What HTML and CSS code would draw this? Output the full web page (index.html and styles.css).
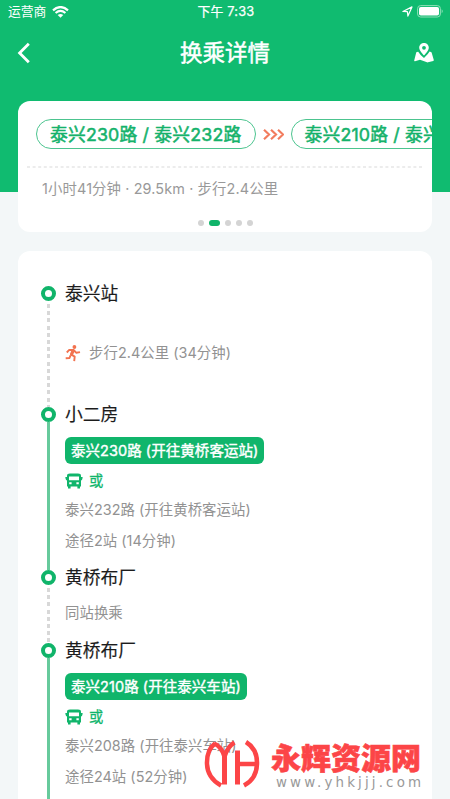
FILE: index.html
```html
<!DOCTYPE html>
<html lang="zh-CN">
<head>
<meta charset="utf-8">
<title>换乘详情</title>
<link rel="stylesheet" href="styles.css">
</head>
<body>
<svg class="defs" aria-hidden="true">
  <symbol id="bus" viewBox="0 0 18 16">
    <path fill-rule="evenodd" d="M2 3Q2 .6 5 .6H13Q16 .6 16 3V4H17.2Q18 4 17.6 5L16.9 7.2H16V13.6H15V15.4H12.4V13.6H5.6V15.4H3V13.6H2V7.2H1.1L.4 5Q0 4 .8 4H2ZM4 3.4V7.3H14V3.4ZM4.2 9.3V11.3H6.6V9.3ZM11.4 9.3V11.3H13.8V9.3Z"/>
  </symbol>
</svg>
<div class="screen">
  <header class="head">
    <div class="status">
      <div class="status-side">
        <span>运营商</span>
        <svg class="wifi" viewBox="0 0 17 12"><path d="M1 4.3Q8.5 -2.2 16 4.3M3.6 7Q8.5 2.9 13.4 7" fill="none" stroke="#fff" stroke-width="2.2"/><path d="M5.7 9Q8.5 6.8 11.3 9L8.5 11.8Z" fill="#fff"/></svg>
      </div>
      <span class="clock">下午 7:33</span>
      <div class="status-side status-right">
        <svg class="locate" viewBox="0 0 11 11"><path d="M.9 5.5 10 .9 5.9 10.1 5.4 5.7Z" fill="none" stroke="#fff" stroke-width="1.2" stroke-linejoin="round"/></svg>
        <svg class="battery" viewBox="0 0 27 13"><rect x=".6" y=".6" width="22.8" height="11.4" rx="3" fill="none" stroke="#8fe0b8" stroke-width="1"/><rect x="2" y="2" width="20" height="8.6" rx="1.8" fill="#fff"/><path d="M24.7 4.3Q26.8 6.3 24.7 8.3Z" fill="#8fe0b8"/></svg>
      </div>
    </div>
    <nav class="nav">
      <svg class="back" viewBox="0 0 14 22"><path d="M11.8 1.7 2.6 11 11.8 20.3" fill="none" stroke="#fff" stroke-width="2.8"/></svg>
      <h1>换乘详情</h1>
      <svg class="map" viewBox="0 0 20 20"><path fill="#fff" fill-rule="evenodd" d="M10 0C6.9 0 5.2 2.200 5.200 4.800 5.200 7.700 10 12.500 10 12.500S14.800 7.700 14.800 4.800C14.800 2.200 13.100 0 10 0ZM10 2.900A1.900 1.900 0 1 1 10 6.700 1.900 1.900 0 1 1 10 2.900Z"/><path fill="#fff" d="M4.200 8.700 2.800 9.100Q2.300 9.300 2.100 9.900L.2 17.400Q0 18.400 1 18.200L6 16.700 13 19.300Q13.500 19.500 14 19.300L19.200 17.900Q20 17.600 19.800 16.900L17.600 9.600Q17.400 9 16.900 8.900L15.600 8.600Q14.300 11.200 10 15 5.600 11.300 4.200 8.700Z"/></svg>
    </nav>
  </header>

  <section class="card summary">
    <div class="routes">
      <span class="pill">泰兴230路 / 泰兴232路</span>
      <svg class="arrows" viewBox="0 0 21 11"><path d="M1 .8 6 5.500 1 10.200M8 .8 13 5.500 8 10.200M15 .8 20 5.500 15 10.200" fill="none" stroke="#f27c5e" stroke-width="2.200"/></svg>
      <span class="pill">泰兴210路 / 泰兴208路</span>
    </div>
    <svg class="divider" viewBox="0 0 396 2"><path d="M0 1H396" stroke="#e6e6e6" stroke-width="1.300" stroke-dasharray="3 2.600"/></svg>
    <p class="facts">1小时41分钟 · 29.5km · 步行2.4公里</p>
    <div class="dots"><i></i><i class="on"></i><i></i><i></i><i></i></div>
  </section>

  <main class="card trip">
    <article class="leg walk leg-first">
      <div class="rail"><i class="node"></i><i class="line"></i></div>
      <div class="body">
        <h2>泰兴站</h2>
        <p class="note walk-note">
          <svg class="runner" viewBox="0 0 16 17"><circle cx="9.400" cy="2" r="1.900" fill="#f27350"/><path d="M1.800 7.500 4.200 4.900 8.600 5 11.400 7.800 15 7.100M8.100 5.300 6 9.400 9.700 11.600 9.200 16.200M5.600 10.300 4.400 13.100 .7 13.300" fill="none" stroke="#f27350" stroke-width="1.900" stroke-linejoin="round"/><path d="M6.500 4.800 10 5.600 7.700 10.500 5 9.400Z" fill="#f27350"/></svg>
          <span>步行2.4公里 (34分钟)</span>
        </p>
      </div>
    </article>
    <article class="leg ride leg-second">
      <div class="rail"><i class="node"></i><i class="line"></i></div>
      <div class="body">
        <h2>小二房</h2>
        <span class="tag">泰兴230路 (开往黄桥客运站)</span>
        <p class="or"><svg class="bus"><use href="#bus"/></svg>或</p>
        <p class="note">泰兴232路 (开往黄桥客运站)</p>
        <p class="note">途径2站 (14分钟)</p>
      </div>
    </article>
    <article class="leg walk leg-third">
      <div class="rail"><i class="node"></i><i class="line"></i></div>
      <div class="body">
        <h2>黄桥布厂</h2>
        <p class="note same">同站换乘</p>
      </div>
    </article>
    <article class="leg ride leg-last">
      <div class="rail"><i class="node"></i><i class="line"></i></div>
      <div class="body">
        <h2>黄桥布厂</h2>
        <span class="tag">泰兴210路 (开往泰兴车站)</span>
        <p class="or"><svg class="bus"><use href="#bus"/></svg>或</p>
        <p class="note">泰兴208路 (开往泰兴车站)</p>
        <p class="note">途径24站 (52分钟)</p>
      </div>
    </article>
  </main>

  <aside class="mark">
    <svg class="mark-logo" viewBox="0 0 56 50"><g fill="none" stroke="#fc4547"><path d="M11 4.500Q2.500 11 3 25T17 46.500" stroke-width="4.500"/><path d="M42 3Q53.500 10 53 25T40 46.500" stroke-width="4.500"/><path d="M10 4.500Q17 7 20.500 17.500 24 7 30.500 3.500" stroke-width="4.500"/><path d="M20.500 15V45.500M33.500 11.500V45.500" stroke-width="5"/><path d="M33 25H53" stroke-width="4.500"/></g></svg>
    <div class="mark-text">
      <strong>永辉资源网</strong>
      <span>www.yhkjjj.com</span>
    </div>
  </aside>
</div>
</body>
</html>
```
FILE: styles.css
```css
* { box-sizing: border-box; margin: 0; padding: 0; }
body {
  font-family: Inter, "Noto Sans CJK SC", sans-serif;
  background: #f3f7f8;
  white-space: nowrap;
}
.defs { display: none; }
svg { display: block; flex: none; }
.screen { position: relative; height: 799px; overflow: hidden; display: flex; flex-direction: column; }

.head { flex: none; height: 192px; background: #10bb70; color: #fff; }
.status {
  display: grid; grid-template-columns: 1fr auto 1fr; align-items: center;
  height: 22px; padding: 1px 6px 0 8px; font-size: 12.8px; line-height: 20px;
}
.status-side { display: flex; align-items: center; gap: 6px; }
.status-right { justify-content: flex-end; gap: 4px; }
.wifi { width: 17px; height: 12px; }
.locate { width: 11px; height: 11px; }
.battery { width: 27px; height: 13px; }
.clock { letter-spacing: .2px; -webkit-text-stroke: .25px #fff; }
.nav { display: grid; grid-template-columns: 20px 1fr 20px; align-items: center; height: 60px; padding: 1px 16px 0; }
.nav h1 { padding-top: 1px; text-align: center; font-size: 22.5px; font-weight: 400; line-height: 32px; -webkit-text-stroke: .5px #fff; }
.back { width: 14px; height: 22px; margin-left: 1px; }
.map { width: 20px; height: 20px; }

.card { flex: none; margin: 0 18px; background: #fff; border-radius: 12px; overflow: hidden; }
.summary { height: 131px; margin-top: -91px; padding-top: 18px; }
.routes { display: flex; align-items: center; padding-left: 18px; }
.pill {
  flex: none; width: 220px; height: 30px; padding: 1px 0 0 13px; border: 1.3px solid #4cc48f; border-radius: 15px;
  font-size: 17.8px; line-height: 28px; letter-spacing: .17px; color: #15b26b;
  -webkit-text-stroke: .5px #15b26b;
}
.arrows { width: 21px; height: 11px; margin: 0 6.5px 0 7px; }
.divider { width: 396px; height: 2px; margin: 17px 0 0 9px; }
.facts { margin: 10px 0 0 24px; font-size: 14.4px; letter-spacing: .12px; line-height: 22px; color: #999; }
.dots { display: flex; justify-content: center; gap: 5px; margin-top: 20px; }
.dots i { width: 6px; height: 6px; border-radius: 3px; background: #d4d4d4; }
.dots .on { width: 11px; background: #10b46a; }

.trip { margin-top: 18.5px; padding: 29.5px 23px 0; height: 560px; }
.leg { display: flex; gap: 9px; }
.leg-first { height: 121px; }
.leg-second { height: 163px; }
.leg-third { height: 73px; }
.leg-last { height: 210px; }
.rail { display: flex; flex-direction: column; align-items: center; width: 15px; padding-top: 6px; margin-bottom: -6px; }
.node { flex: none; width: 15px; height: 15px; border: 4px solid #10b46a; border-radius: 50%; }
.line { flex: 1; width: 2.5px; }
.ride .line { background: #67ca9c; }
.walk .line { margin-top: 3px; background: repeating-linear-gradient(#d8d8d8 0 4px, transparent 4px 7.2px); }
.body { display: flex; flex-direction: column; align-items: flex-start; }
.body h2 { font-size: 17.8px; font-weight: 400; line-height: 28px; color: #1c1c1c; -webkit-text-stroke: .15px #1c1c1c; }
.note { font-size: 14.4px; letter-spacing: .05px; line-height: 22px; color: #929292; }
.note + .note { margin-top: 9px; }
.walk-note { display: flex; align-items: center; gap: 8px; margin-top: 34px; }
.runner { width: 16px; height: 17px; }
.same { margin-top: 10px; }
.tag {
  margin-top: 8px; height: 27px; padding: 0 6px; border-radius: 6px; background: #10b56b;
  color: #fff; font-size: 14.5px; line-height: 27px; letter-spacing: .05px; -webkit-text-stroke: .4px #fff;
}
.or { display: flex; align-items: center; gap: 6px; margin: 7px 0 8px; font-size: 14.3px; line-height: 20px; color: #10b56b; -webkit-text-stroke: .25px #10b56b; }
.bus { width: 18px; height: 16px; fill: #10b56b; -webkit-text-stroke: 0; }

.mark { position: absolute; left: 204px; top: 739px; display: flex; gap: 11px; }
.mark-logo { width: 56px; height: 50px; }
.mark-text { display: flex; flex-direction: column; }
.mark strong { font: 900 30px/34px "Noto Sans CJK SC", sans-serif; color: #fc4547; -webkit-text-stroke: .6px #fc4547; }
.mark span { margin: 2px 0 0 5px; font: 13.4px/16px "DejaVu Sans", sans-serif; letter-spacing: 3.15px; color: #999; }
```
